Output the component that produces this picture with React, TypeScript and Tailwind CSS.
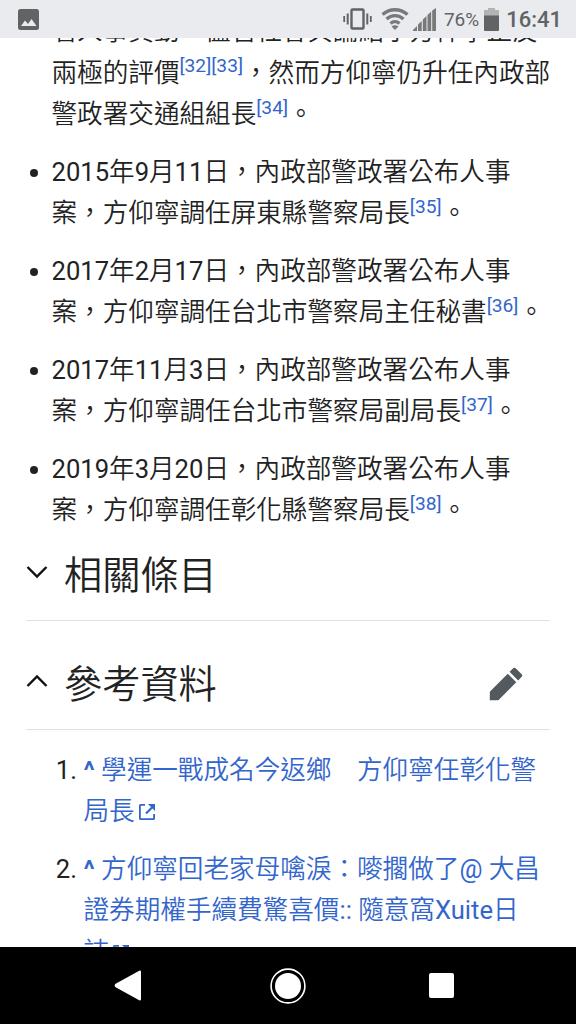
import type { ReactNode } from "react";

const EVENTS = [
    { id: "35", date: "2015年9月11日", post: "屏東縣警察局長" },
    { id: "36", date: "2017年2月17日", post: "台北市警察局主任秘書" },
    { id: "37", date: "2017年11月3日", post: "台北市警察局副局長" },
    { id: "38", date: "2019年3月20日", post: "彰化縣警察局長" },
];

const REFERENCES = [
    ["學運一戰成名今返鄉　方仰寧任彰化警", "局長"],
    ["方仰寧回老家母噙淚：嘜擱做了@ 大昌", "證券期權手續費驚喜價:: 隨意窩Xuite日", "誌"],
];

export default function App() {
    return (
        <div
            lang="zh-Hant"
            className="flex h-[1024px] w-[576px] flex-col overflow-hidden bg-white font-[Roboto,'Noto_Sans_CJK_TC_DemiLight','Noto_Sans_CJK_TC',sans-serif] text-[25.6px] leading-[41.5px] text-[#222]"
        >
            <StatusBar />
            <main className="min-h-0 flex-1 overflow-hidden whitespace-nowrap pr-[26px] pl-[26px]">
                <ul className="-mt-[26.7px] flex flex-col gap-4 pl-[25.5px]">
                    <li>
                        署人事異動，儘管社會輿論給予方仰寧正反
                        <br />
                        兩極的評價<Cite id="32" /><Cite id="33" />，然而方仰寧仍升任內政部
                        <br />
                        警政署交通組組長<Cite id="34" />。
                    </li>
                    {EVENTS.map((e) => (
                        <li key={e.id} className="-ml-[22px] flex gap-[14px]">
                            <span className="mt-[17px] size-2 shrink-0 rounded-full bg-[#222]" />
                            <p>
                                {e.date}，內政部警政署公布人事
                                <br />
                                案，方仰寧調任{e.post}<Cite id={e.id} />。
                            </p>
                        </li>
                    ))}
                </ul>

                <SectionHeading title="相關條目" />
                <div className="h-5" />
                <SectionHeading title="參考資料" open />

                <ol className="mt-5 flex flex-col gap-4">
                    {REFERENCES.map((lines, idx) => (
                        <li key={idx} className="flex">
                            <span className="w-[51px] shrink-0 text-right">{idx + 1}.</span>
                            <p className="pl-[6.5px] text-[#36c]">
                                <b>^</b>{" "}
                                {lines.map((line, n) => (
                                    <span key={n}>
                                        {n > 0 && <br />}
                                        {line}
                                    </span>
                                ))}
                                <ExternalIcon />
                            </p>
                        </li>
                    ))}
                </ol>
            </main>
            <NavBar />
        </div>
    );
}

function Cite({ id }: { id: string }) {
    return <sup className="top-0 align-super text-[19.2px] leading-none text-[#36c]">[{id}]</sup>;
}

function SectionHeading({ title, open = false }: { title: ReactNode; open?: boolean }) {
    return (
        <div className="flex h-[89px] items-center border-b border-[#dfe1e4]">
            <svg viewBox="0 0 22 22" className="mt-[-7px] h-[22px] w-[22px]" fill="none" stroke="#111" strokeWidth="2.4">
                <path d={open ? "M1.5 16 11 6.5 20.5 16" : "M1.5 6 11 15.5 20.5 6"} />
            </svg>
            <h2 className="ml-[16px] text-[38.2px] leading-[50px]">{title}</h2>
            {open && (
                <svg viewBox="0 0 20 20" className="mt-[-1px] mr-[26px] ml-auto size-9" fill="#54595d">
                    <path d="M16.77 8l1.94-2a1 1 0 0 0 0-1.41l-3.34-3.3a1 1 0 0 0-1.41 0L12 3.23zM1 14.25V19h4.75l9.96-9.96-4.75-4.75z" />
                </svg>
            )}
        </div>
    );
}

function ExternalIcon() {
    return (
        <svg viewBox="0 0 18 18" className="ml-[3px] inline size-[18px] align-[-1px]" fill="none" stroke="#36c" strokeWidth="1.8">
            <path d="M7 1.9H2.6Q1.9 1.9 1.9 2.6V15.4Q1.9 16.1 2.6 16.1H15.4Q16.1 16.1 16.1 15.4V11" />
            <path d="M8 10.5 14.5 4" strokeWidth="2.2" />
            <path d="M10 1h7v7z" fill="#36c" stroke="none" />
        </svg>
    );
}

function StatusBar() {
    return (
        <header className="flex h-[38px] shrink-0 items-center bg-[#e9ebee] pr-[14px] pl-[18px] text-[#616365]">
            <svg viewBox="0 0 21 21" className="size-[21px]">
                <rect width="21" height="21" rx="2.5" fill="#616365" />
                <path d="M3 17 7 11.5 10 15 13.5 10 18.5 17z" fill="#e9ebee" />
            </svg>
            <svg viewBox="0 0 29 22" className="ml-auto h-[22px] w-[29px]" fill="none" stroke="#616365">
                <rect x="8.5" y="1.5" width="12" height="19" rx="1" strokeWidth="2.4" />
                <path d="M4.7 5.5v11M24.3 5.5v11" strokeWidth="2" />
                <path d="M1.2 8v6M27.8 8v6" strokeWidth="1.8" />
            </svg>
            <svg viewBox="0 0 28 22" className="ml-[9px] h-[22px] w-[28px]" fill="none" stroke="#77797b" strokeWidth="3.4">
                <path d="M1.5 6.5C9 .2 19 .2 26.5 6.5M5.5 11c5-4.5 12-4.5 17 0M9.5 15.5c2.7-2.3 6.3-2.3 9 0" />
                <path d="M14 22l-3.5-3.5q3.5-2.5 7 0z" fill="#77797b" stroke="none" />
            </svg>
            <svg viewBox="0 0 23 23" className="ml-[4px] h-[23px] w-[23px]" fill="#77797b">
                <path d="M0 23v-1l4-4v5zM5 23v-6.5l3.7-3.5v10zM9.8 23v-11.5l3.7-3.5v15zM14.5 23v-16l3.7-3.5v19.5zM19.2 23v-20.5l3.8-2.5v23z" />
            </svg>
            <span className="mt-[2px] ml-[8px] text-[19px] leading-6">76%</span>
            <svg viewBox="0 0 15 23" className="ml-[5px] h-[23px] w-[15px]">
                <path d="M4 0h7v2h4v6H0V2h4z" fill="#b1b3b5" />
                <path d="M0 7.5h15V22q0 1-1 1H1q-1 0-1-1z" fill="#616365" />
            </svg>
            <span className="mt-[2px] ml-[7px] text-[22px] font-medium leading-6">16:41</span>
        </header>
    );
}

function NavBar() {
    return (
        <nav className="flex h-[77px] shrink-0 items-center bg-black pr-[122px] pl-[114px]">
            <svg viewBox="0 0 27 31" className="h-[31px] w-[27px]" fill="#fff">
                <path d="M25.2.7Q27 0 27 2v27q0 2-1.8 1.3L1.2 17Q0 15.5 1.2 14z" />
            </svg>
            <svg viewBox="0 0 36 36" className="mr-auto ml-[129px] size-9">
                <circle cx="18" cy="18" r="16.9" fill="none" stroke="#fff" strokeWidth="1.6" />
                <circle cx="18" cy="18" r="13" fill="#fff" />
            </svg>
            <span className="size-[25px] rounded-[2px] bg-white" />
        </nav>
    );
}
